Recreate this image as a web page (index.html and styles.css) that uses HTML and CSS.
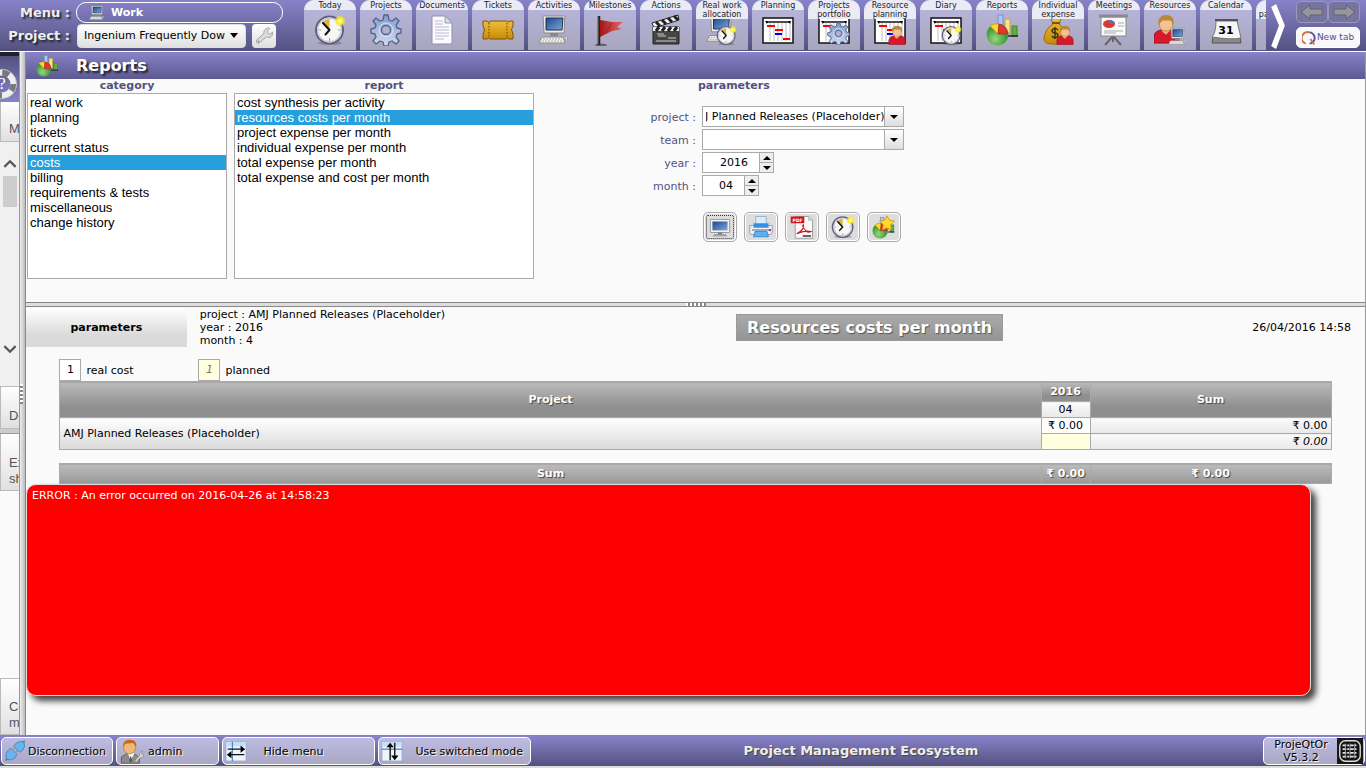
FILE: index.html
```html
<!DOCTYPE html>
<html lang="en">
<head>
    <meta charset="UTF-8">
    <meta name="viewport" content="width=device-width, initial-scale=1.0">
    <title>Reports - ProjeQtOr</title>
    <link rel="stylesheet" href="styles.css">
</head>
<body>
    <!-- Icon set -->
    <svg class="sprite" aria-hidden="true">
        <defs>
            <linearGradient id="g-screen" x2="1" y2="1"><stop stop-color="#1c468f"/><stop offset="1" stop-color="#7fa8dc"/></linearGradient>
            <linearGradient id="g-gold" x2="0" y2="1"><stop stop-color="#f0be38"/><stop offset="1" stop-color="#c88a08"/></linearGradient>
            <linearGradient id="g-gear" x2="0" y2="1"><stop stop-color="#7e9bc9"/><stop offset="1" stop-color="#d5dcf0"/></linearGradient>
            <linearGradient id="g-flag" x2="1"><stop stop-color="#a31515"/><stop offset="1" stop-color="#e46a62"/></linearGradient>
            <radialGradient id="g-green" cx=".4" cy=".7"><stop stop-color="#9ad87a"/><stop offset="1" stop-color="#3c9a3c"/></radialGradient>
            <radialGradient id="g-spark"><stop stop-color="#fffcc0"/><stop offset=".5" stop-color="#f8ee20"/><stop offset="1" stop-color="#f8ee20" stop-opacity="0"/></radialGradient>
        </defs>
        <symbol id="i-clock" viewBox="0 0 32 32">
            <ellipse cx="16" cy="29" rx="12" ry="2" fill="#555" opacity=".4"/>
            <circle cx="15.500" cy="16" r="13.500" fill="#f7f7f4" stroke="#625f7c" stroke-width="2"/>
            <circle cx="15.500" cy="16" r="11.800" fill="none" stroke="#c9c7da" stroke-width="1.500"/>
            <path d="M15.500 16L8 9q3-4 7.500-4z" fill="#dcb247"/>
            <path d="M15.500 16L9 9M15.500 16l-4 4.500" stroke="#111" stroke-width="2" stroke-linecap="round"/>
            <path d="M15.500 24v3M5 16h2M24 16h2" stroke="#999"/>
            <circle cx="26" cy="7" r="6" fill="url(#g-spark)"/>
        </symbol>
        <symbol id="i-gear" viewBox="0 0 32 32">
            <path d="M14 1h4l1 5 3 1 4-3 3 3-3 4 1 3 4 1v4l-4 1-1 3 3 4-3 3-4-3-3 1-1 4h-4l-1-4-3-1-4 3-3-3 3-4-1-3-4-1v-4l4-1 1-3-3-4 3-3 4 3 3-1z" fill="url(#g-gear)" stroke="#50648f" stroke-width="1.300" stroke-linejoin="round"/>
            <circle cx="16" cy="16" r="4.500" fill="#b2b0cf" stroke="#50648f" stroke-width="1.300"/>
            <circle cx="16" cy="16" r="7" fill="none" stroke="#dfe6f5"/>
        </symbol>
        <symbol id="i-doc" viewBox="0 0 32 32">
            <path d="M6 2h13l7 7v21H6z" fill="#fbfbff" stroke="#98a"/>
            <path d="M19 2v7h7z" fill="#dcdce8" stroke="#99a"/>
            <path d="M9 7h8M9 10h8M9 13h14M9 16h14M9 19h14M9 22h14M9 25h9" stroke="#b9bad0"/>
        </symbol>
        <symbol id="i-ticket" viewBox="0 0 32 32">
            <path d="M1 7h4q1 2 3 1V7h17q1 2 3 0h3v5q-3 3 0 8v5h-4q-2-2-3 0H8q-1-2-3 0H1v-5q3-4 0-8z" fill="url(#g-gold)" stroke="#7d5409"/>
            <path d="M7 9v15M25 9v15" stroke="#6b4708" stroke-dasharray="1.500 1.500"/>
        </symbol>
        <symbol id="i-pc" viewBox="0 0 32 32">
            <path d="M5 2h22l-1 17H6z" fill="#ecece6" stroke="#8a8a86"/>
            <path d="M8 4h17l-1 12H8z" fill="url(#g-screen)" stroke="#1b2d5a"/>
            <path d="M12 19h8v3h-8z" fill="#888"/>
            <path d="M4 23h21l2 6H1z" fill="#f1f1ec" stroke="#8a8a86"/>
            <path d="M5 25h19M4 27h21" stroke="#aaa" stroke-dasharray="2 1"/>
            <path d="M27 23q4-2 2 3" fill="#eee" stroke="#999"/>
        </symbol>
        <symbol id="i-monitor" viewBox="0 0 32 32">
            <rect x="2" y="5" width="28" height="19" rx="1" fill="#f3f3f0" stroke="#777"/>
            <rect x="5" y="8" width="22" height="13" fill="url(#g-screen)"/>
            <path d="M13 24h6v3h-6z" fill="#777"/><path d="M8 27h16l2 2H6z" fill="#bbb" stroke="#888"/>
        </symbol>
        <symbol id="i-flag" viewBox="0 0 32 32">
            <path d="M5 31V2" stroke="#222" stroke-width="2.500"/><path d="M4 30V3" stroke="#777"/>
            <path d="M6 6l12 2 11 0-6 5 5 2-10 2-12 6z" fill="url(#g-flag)"/>
            <path d="M18 8l-6 12" stroke="#8e1414" opacity=".5"/>
            <ellipse cx="7" cy="31" rx="6" ry="1.500" fill="#333" opacity=".6"/>
        </symbol>
        <symbol id="i-clap" viewBox="0 0 32 32">
            <path d="M2 9L28 1l1 5L4 14z" fill="#f4f4f4" stroke="#222"/>
            <path d="M6 8l4 4M12 6l4 4M18 4l4 4M24 2l4 4" stroke="#222" stroke-width="3"/>
            <path d="M3 13h26v17H3z" fill="#444744" stroke="#222"/>
            <path d="M3 13h26v4H3z" fill="#eee"/><path d="M6 17l3-4M12 17l3-4M18 17l3-4M24 17l3-4" stroke="#222" stroke-width="3"/>
            <path d="M7 20h7M8 22h8M18 24h8M6 27h20" stroke="#ccc"/>
        </symbol>
        <symbol id="i-gantt" viewBox="0 0 32 32">
            <rect x="1" y="4" width="30" height="25" fill="#fff" stroke="#111" stroke-width="1.500"/>
            <path d="M8 9v18M12 9v18M16 9v18M20 9v18M24 9v18M28 9v18" stroke="#c0c0c8"/>
            <path d="M4 8h24" stroke="#111" stroke-width="1.500"/><path d="M3 7h3l-1 3zM26 7h3l-1 3z"/>
            <path d="M5 12h8M13 16h8M21 25h7" stroke="#f00" stroke-width="2"/><path d="M13 20h7" stroke="#00f" stroke-width="2"/>
        </symbol>
        <symbol id="i-person" viewBox="0 0 32 32">
            <path d="M3 31V24q1-6 8-7l5 3 5-3q8 1 8 8v6z" fill="#d8182c" stroke="#99101c"/>
            <path d="M12 15h8v3l-4 4-4-3z" fill="#e9b07a"/>
            <rect x="9" y="3" width="14" height="15" rx="6" fill="#f1c391" stroke="#bd8650"/>
            <path d="M8 12V6q2-5 9-5 7 1 7 6v5l-3-5H12z" fill="#b98838"/>
        </symbol>
        <symbol id="i-portfolio" viewBox="0 0 32 32">
            <use href="#i-gantt"/><use href="#i-gear" x="9" y="8" width="23" height="23"/>
        </symbol>
        <symbol id="i-work" viewBox="0 0 32 32">
            <use href="#i-pc" width="30" height="30"/><use href="#i-clock" x="10" y="11" width="21" height="21"/>
        </symbol>
        <symbol id="i-resplan" viewBox="0 0 32 32">
            <use href="#i-gantt"/><use href="#i-person" x="13" y="11" width="20" height="20"/>
        </symbol>
        <symbol id="i-diary" viewBox="0 0 32 32">
            <use href="#i-gantt"/><use href="#i-clock" x="11" y="11" width="21" height="21"/>
        </symbol>
        <symbol id="i-pie" viewBox="0 0 32 32">
            <rect x="12" y="1" width="5" height="12" fill="#a9c7f2" stroke="#6f95cf"/>
            <rect x="19" y="5" width="5" height="14" fill="#f8e28c" stroke="#caa53e"/>
            <rect x="26" y="12" width="5" height="10" fill="#5fae40" stroke="#3c8a2c"/>
            <path d="M22 22h10" stroke="#222" stroke-width="1.500"/>
            <circle cx="11.500" cy="20.500" r="10.800" fill="url(#g-green)"/>
            <path d="M12 20L4 12q4-3 9-2z" fill="#f9d92c" stroke="#b88a10" stroke-width=".6"/>
            <path d="M12 20l1-10q7 1 9 10z" fill="#e8322c" stroke="#b01818" stroke-width=".6"/>
        </symbol>
        <symbol id="i-star" viewBox="0 0 32 32">
            <use href="#i-pie" y="2" width="30" height="30"/>
            <path d="M20 1l3 6 7 1-5 5 1 7-6-3-6 3 1-7-5-5 7-1z" fill="#ffd92e" stroke="#d58a08"/>
        </symbol>
        <symbol id="i-bag" viewBox="0 0 32 32">
            <path d="M8 3q6-3 12 0l-3 7q10 8 9 16-2 5-12 4Q1 31 2 24q1-9 9-14z" fill="url(#g-gold)" stroke="#9a6b10"/>
            <path d="M10 9h8" stroke="#7a5208" stroke-width="2"/>
            <path d="M16 16q-3-3-6 0 0 3 3 3t3 3q-3 4-6 0M13 13v12" fill="none" stroke="#3e3216" stroke-width="1.500"/>
            <use href="#i-person" x="13" y="11" width="20" height="20"/>
        </symbol>
        <symbol id="i-board" viewBox="0 0 32 32">
            <path d="M15 22l-8 9M15 22l8 9M15 20v8" stroke="#666" stroke-width="2"/>
            <rect x="3" y="3" width="25" height="19" fill="#fafafa" stroke="#888"/>
            <path d="M1 2h29" stroke="#8a8a90" stroke-width="3"/>
            <ellipse cx="11" cy="10" rx="6" ry="4" fill="#d63a32"/><path d="M11 10V6q5 0 6 4z" fill="#4477c4"/>
            <path d="M20 9h6M20 12h6M6 17h19M6 19h12" stroke="#aaa"/>
        </symbol>
        <symbol id="i-resource" viewBox="0 0 32 32">
            <use href="#i-person" x="-3" width="30" height="30"/><use href="#i-pc" x="14" y="13" width="19" height="19"/>
        </symbol>
        <symbol id="i-cal" viewBox="0 0 32 32">
            <path d="M3 23h27l1 6H2z" fill="#888" stroke="#555"/>
            <path d="M6 7h21l4 17q-10 2-29-1 4-5 4-16z" fill="#f6f6f6" stroke="#777"/><path d="M5 6h23" stroke="#555" stroke-width="2"/>
            <text x="16" y="20" class="cal-day">31</text>
        </symbol>
        <symbol id="i-wrench" viewBox="0 0 24 24">
            <path d="M5 21q-3-1-2-4l9-8q-1-5 5-7l2 1-3 3 1 3 3 1 2-3q1 6-4 7l-3-1z" fill="#dcdcdc" stroke="#999"/><circle cx="5.500" cy="18.500" r="1" fill="#888"/>
        </symbol>
        <symbol id="i-printer" viewBox="0 0 32 32">
            <path d="M9 2h14v14H9z" fill="#d9ecfb" stroke="#7fa7cb"/>
            <path d="M1 14h30v9q0 3-3 3H4q-3 0-3-3z" fill="#eef1f6" stroke="#7c8ca8"/>
            <path d="M6 11h20v6H6z" fill="#3590e0"/><path d="M4 20h24" stroke="#8592aa" stroke-width="2"/>
            <path d="M8 22h16l2 7H6z" fill="#57b4f2" stroke="#2b79b8"/><circle cx="28" cy="20" r="1.500" fill="#e02"/>
        </symbol>
        <symbol id="i-pdf" viewBox="0 0 32 32">
            <path d="M7 2h18l5 5v24H7z" fill="#fafafa" stroke="#888"/><path d="M24 2v6h6z" fill="#ccc"/>
            <path d="M1 2h18v9H1z" fill="#d2151b"/><text x="10" y="9" class="pdf-word">PDF</text>
            <path d="M9 25q10-5 9-12-3 1 3 8 3 3 7 1-9-2-19 3z" fill="none" stroke="#d2151b" stroke-width="1.500"/>
            <path d="M17 28h11" stroke="#333" stroke-width="2"/>
        </symbol>
        <symbol id="i-plug" viewBox="0 0 32 32">
            <path d="M2 30l6-6M24 8l6-7" stroke="#777" stroke-width="2.500"/>
            <path d="M4 28q-3-7 1-12l5-4 9 9-3 5q-6 5-12 2z" fill="#6ab4ee" stroke="#2e76b8"/>
            <path d="M14 9l3-4q6-5 12-2 3 7-2 12l-4 3z" fill="#6ab4ee" stroke="#2e76b8"/>
            <path d="M12 15l4-4M16 19l4-4" stroke="#999" stroke-width="2.500"/>
        </symbol>
        <symbol id="i-admin" viewBox="0 0 32 32">
            <path d="M3 31v-8l8-5h8l7 6v7z" fill="#8b8b8d" stroke="#555"/><path d="M11 18l4 9 5-9z" fill="#fff"/><path d="M15 21l-2 7 2 2 2-2z" fill="#555"/>
            <rect x="6" y="2" width="15" height="17" rx="7" fill="#f1b777" stroke="#b97834"/><path d="M5 10q0-9 9-9t8 9L18 5 8 6z" fill="#c06c18"/>
            <path d="M20 28l6-7q-1-4 4-6l-1 4 3 1q-1 5-5 4l-5 6z" fill="#d4d4d8" stroke="#888"/>
        </symbol>
        <symbol id="i-hide" viewBox="0 0 24 24">
            <rect x="1" y="2" width="22" height="21" fill="#edf4fc" stroke="#8fa7c5"/><rect x="1" y="2" width="22" height="5" fill="#c5ddf5"/><path d="M8 2v21" stroke="#2a65ba"/>
            <path d="M3 10h15M6 16h15" stroke="#111" stroke-width="1.500"/><path d="M17 6l5 4-5 4zM7 12l-5 4 5 4z"/>
        </symbol>
        <symbol id="i-switch" viewBox="0 0 24 24">
            <rect x="1" y="2" width="22" height="21" fill="#edf4fc" stroke="#8fa7c5"/><rect x="1" y="2" width="22" height="5" fill="#c5ddf5"/><path d="M1 10h22" stroke="#1658c7"/>
            <path d="M10 5v17M15 3v17" stroke="#111" stroke-width="1.500"/><path d="M6 8l4-5 4 5zM11 17l4 5 4-5z"/>
        </symbol>
        <symbol id="i-help" viewBox="0 0 36 36">
            <circle cx="18" cy="18" r="13" fill="none" stroke="#eee" stroke-width="7"/>
            <circle cx="18" cy="18" r="13" fill="none" stroke="#77777c" stroke-width="7" stroke-dasharray="8 12.400"/>
            <circle cx="18" cy="18" r="16.500" fill="none" stroke="#bbb"/><text x="18" y="24" class="help-mark">?</text>
        </symbol>
        <symbol id="i-left" viewBox="0 0 24 16">
            <path d="M1 8l9-7v4h12v6H10v4z" fill="#96969c" stroke="#626270"/>
        </symbol>
        <symbol id="i-q" viewBox="0 0 16 16">
            <path d="M4 14A6 6 0 0 1 8 2" fill="none" stroke="#d5713c" stroke-width="2"/>
            <path d="M8 2a6 6 0 0 1 4 10q-2 2-4 2" fill="none" stroke="#56569b" stroke-width="2"/><path d="M9 9l4 6" stroke="#d5713c" stroke-width="2"/>
        </symbol>
        <symbol id="i-logo" viewBox="0 0 28 28">
            <rect width="28" height="28" fill="#181818"/><rect x="3" y="3" width="22" height="22" rx="6" fill="#111" stroke="#ddd" stroke-width="1.500"/>
            <path d="M6 8h16M6 12h16M6 16h16M6 20h16" stroke="#e4e4e4" stroke-width="2" stroke-dasharray="4 1 2 1"/><path d="M9 6v16M14 6v16M19 6v16" stroke="#aaa"/>
        </symbol>
    </svg>

    <header class="top-bar">
        <div class="selectors">
            <span class="selector-label">Menu :</span>
            <button class="menu-pill"><svg><use href="#i-pc"/></svg>Work</button>
            <label class="selector-label" for="current-project">Project :</label>
            <div class="project-row">
                <span class="project-select">
                    <select id="current-project"><option>Ingenium Frequently Dow</option></select>
                </span>
                <button class="tool-button" aria-label="Project settings"><svg><use href="#i-wrench"/></svg></button>
            </div>
        </div>
        <nav class="tabs">
            <a href="#" class="tab"><svg><use href="#i-clock"/></svg><span>Today</span></a>
            <a href="#" class="tab"><svg><use href="#i-gear"/></svg><span>Projects</span></a>
            <a href="#" class="tab"><svg><use href="#i-doc"/></svg><span>Documents</span></a>
            <a href="#" class="tab"><svg><use href="#i-ticket"/></svg><span>Tickets</span></a>
            <a href="#" class="tab"><svg><use href="#i-pc"/></svg><span>Activities</span></a>
            <a href="#" class="tab"><svg><use href="#i-flag"/></svg><span>Milestones</span></a>
            <a href="#" class="tab"><svg><use href="#i-clap"/></svg><span>Actions</span></a>
            <a href="#" class="tab"><svg><use href="#i-work"/></svg><span>Real work allocation</span></a>
            <a href="#" class="tab"><svg><use href="#i-gantt"/></svg><span>Planning</span></a>
            <a href="#" class="tab"><svg><use href="#i-portfolio"/></svg><span>Projects portfolio</span></a>
            <a href="#" class="tab"><svg><use href="#i-resplan"/></svg><span>Resource planning</span></a>
            <a href="#" class="tab"><svg><use href="#i-diary"/></svg><span>Diary</span></a>
            <a href="#" class="tab"><svg><use href="#i-pie"/></svg><span>Reports</span></a>
            <a href="#" class="tab"><svg><use href="#i-bag"/></svg><span>Individual expense</span></a>
            <a href="#" class="tab"><svg><use href="#i-board"/></svg><span>Meetings</span></a>
            <a href="#" class="tab"><svg><use href="#i-resource"/></svg><span>Resources</span></a>
            <a href="#" class="tab"><svg><use href="#i-cal"/></svg><span>Calendar</span></a>
            <a href="#" class="tab"><span>User parameters</span></a>
        </nav>
        <button class="tabs-next" aria-label="More tabs"><svg viewBox="0 0 14 46"><path d="M0 3l5-3 9 22-9 24-5-3 8-21z" fill="#fff"/></svg></button>
        <div class="history">
            <button aria-label="Back"><svg><use href="#i-left"/></svg></button>
            <button aria-label="Forward" class="forward"><svg><use href="#i-left"/></svg></button>
            <button class="new-tab"><svg><use href="#i-q"/></svg>New tab</button>
        </div>
    </header>

    <div class="workspace">
        <aside class="sidebar">
            <div class="side-logo"><svg><use href="#i-help"/></svg></div>
            <div class="side-title menu-title">Menu</div>
            <div class="side-scroll">
                <svg viewBox="0 0 12 8"><path d="M1 7l5-5 5 5"/></svg>
                <div class="thumb"></div>
                <svg class="scroll-down" viewBox="0 0 12 8"><path d="M1 1l5 5 5-5"/></svg>
            </div>
            <div class="side-title docs-title">Documents</div>
            <div class="side-split"></div>
            <div class="side-title links-title">External shortcuts</div>
            <div class="side-space"></div>
            <div class="side-title console-title">Console messages</div>
        </aside>
        <div class="splitter-v"><i></i></div>

        <main class="content">
            <div class="page-title"><svg><use href="#i-pie"/></svg><h1>Reports</h1></div>
            <section class="report-picker">
                <div class="list-block">
                    <label for="category">category</label>
                    <select id="category" class="list category" size="12">
                        <option>real work</option>
                        <option>planning</option>
                        <option>tickets</option>
                        <option>current status</option>
                        <option selected>costs</option>
                        <option>billing</option>
                        <option>requirements &amp; tests</option>
                        <option>miscellaneous</option>
                        <option>change history</option>
                    </select>
                </div>
                <div class="list-block">
                    <label for="report">report</label>
                    <select id="report" class="list report" size="12">
                        <option>cost synthesis per activity</option>
                        <option selected>resources costs per month</option>
                        <option>project expense per month</option>
                        <option>individual expense per month</option>
                        <option>total expense per month</option>
                        <option>total expense and cost per month</option>
                    </select>
                </div>
                <form class="params">
                    <h2>parameters</h2>
                    <label for="p-project">project :</label>
                    <div class="combo">
                        <input id="p-project" type="text" value="AMJ Planned Releases (Placeholder)">
                        <button type="button" aria-label="Open project list"></button>
                    </div>
                    <label for="p-team">team :</label>
                    <div class="combo">
                        <input id="p-team" type="text">
                        <button type="button" aria-label="Open team list"></button>
                    </div>
                    <label for="p-year">year :</label>
                    <div class="spinner">
                        <input id="p-year" type="text" value="2016">
                        <div><button type="button" aria-label="Next year"></button><button type="button" class="down" aria-label="Previous year"></button></div>
                    </div>
                    <label for="p-month">month :</label>
                    <div class="spinner short">
                        <input id="p-month" type="text" value="04">
                        <div><button type="button" aria-label="Next month"></button><button type="button" class="down" aria-label="Previous month"></button></div>
                    </div>
                    <div class="actions">
                        <button type="button" class="focused" aria-label="Display"><svg><use href="#i-monitor"/></svg></button>
                        <button type="button" aria-label="Print"><svg><use href="#i-printer"/></svg></button>
                        <button type="button" aria-label="Export to PDF"><svg><use href="#i-pdf"/></svg></button>
                        <button type="button" aria-label="Show on today page"><svg><use href="#i-clock"/></svg></button>
                        <button type="button" aria-label="Add to favorites"><svg><use href="#i-star"/></svg></button>
                    </div>
                </form>
            </section>
            <div class="splitter-h"><i></i></div>

            <section class="result">
                <div class="report-head">
                    <div class="head-params">parameters</div>
                    <div class="head-values">project : AMJ Planned Releases (Placeholder)<br>year : 2016<br>month : 4</div>
                    <div class="head-title"><h2>Resources costs per month</h2></div>
                    <div class="head-date">26/04/2016 14:58</div>
                </div>
                <div class="legend">
                    <span class="swatch">1</span><span class="legend-text">real cost</span>
                    <span class="swatch planned">1</span><span>planned</span>
                </div>
                <table class="costs">
                    <colgroup><col><col class="col-month"><col class="col-sum"></colgroup>
                    <thead>
                        <tr class="row-year"><th rowspan="2">Project</th><th>2016</th><th rowspan="2">Sum</th></tr>
                        <tr><td class="month">04</td></tr>
                    </thead>
                    <tbody>
                        <tr><td rowspan="2" class="name">AMJ Planned Releases (Placeholder)</td><td class="real">₹ 0.00</td><td class="sum">₹ 0.00</td></tr>
                        <tr><td class="planned"></td><td class="sum italic">₹ 0.00</td></tr>
                        <tr class="gap"><td colspan="3"></td></tr>
                    </tbody>
                    <tfoot>
                        <tr><th>Sum</th><th>₹ 0.00</th><th>₹ 0.00</th></tr>
                    </tfoot>
                </table>
                <div class="error" role="alert">ERROR : An error occurred on 2016-04-26 at 14:58:23</div>
            </section>
        </main>
    </div>

    <footer class="bottom-bar">
        <button class="disconnect"><svg><use href="#i-plug"/></svg><span>Disconnection</span></button>
        <button class="user"><svg><use href="#i-admin"/></svg><span>admin</span></button>
        <button class="wide hide-menu"><svg><use href="#i-hide"/></svg><span>Hide menu</span></button>
        <button class="wide switch-mode"><svg><use href="#i-switch"/></svg><span>Use switched mode</span></button>
        <div class="slogan">Project Management Ecosystem</div>
        <button class="version"><span>ProjeQtOr V5.3.2</span><svg><use href="#i-logo"/></svg></button>
    </footer>

    <script>
        // Show the end of the project name when it is longer than the field
        const projectField = document.getElementById('p-project');
        projectField.scrollLeft = projectField.scrollWidth;
    </script>
</body>
</html>
```
FILE: styles.css
```css
* {
    margin: 0;
    padding: 0;
    box-sizing: border-box;
}

body {
    font-family: Verdana, "DejaVu Sans", sans-serif;
    font-size: 11px;
    line-height: 13px;
    color: #000;
    background: #fafafa;
    height: 100vh;
    display: flex;
    flex-direction: column;
    overflow: hidden;
}

button, input, select {
    font: inherit;
    color: inherit;
}

button {
    border: none;
    background: none;
}

a {
    color: inherit;
    text-decoration: none;
}

svg {
    display: block;
    flex: none;
}

.sprite {
    position: absolute;
    width: 0;
    height: 0;
    visibility: hidden;
}

.cal-day {
    font-size: 11px;
    font-weight: bold;
    text-anchor: middle;
}

.pdf-word {
    font-size: 6px;
    font-weight: bold;
    text-anchor: middle;
    fill: #fff;
}

.help-mark {
    font-family: "Liberation Serif", serif;
    font-size: 19px;
    text-anchor: middle;
    fill: #fff;
}

/* Top bar */
.top-bar {
    display: flex;
    flex: none;
    height: 52px;
    background: linear-gradient(#8783c9, #545180);
    border-bottom: 1px solid #fff;
}

.selectors {
    width: 304px;
    display: grid;
    grid-template-columns: 70px 1fr;
    grid-template-rows: 21px 25px;
    column-gap: 6px;
    padding: 2px 21px 0 0;
    align-items: center;
}

.selector-label {
    font-size: 13px;
    line-height: 20px;
    font-weight: bold;
    text-align: right;
    color: #eee;
    text-shadow: 2px 2px 2px #222;
}

.menu-pill {
    display: flex;
    align-items: center;
    gap: 6px;
    height: 21px;
    padding-left: 12px;
    border: 1px solid #fff;
    border-radius: 10px;
    color: #fff;
    font-weight: bold;
}

.menu-pill svg {
    width: 16px;
    height: 16px;
}

.project-row {
    display: flex;
    gap: 6px;
    padding-left: 1px;
}

.project-select {
    position: relative;
}

.project-select::after {
    content: "";
    position: absolute;
    right: 8px;
    top: 9px;
    border: 4px solid transparent;
    border-top: 5px solid #000;
    pointer-events: none;
}

.project-select select {
    appearance: none;
    width: 169px;
    height: 24px;
    padding-left: 6px;
    border: 1px solid #ddd;
    border-radius: 4px;
    background: linear-gradient(#fff, #e0e0e0);
}

.tool-button {
    width: 24px;
    height: 24px;
    padding: 2px;
    border-radius: 4px;
    background: linear-gradient(#fff, #ddd);
}

.tool-button svg {
    width: 20px;
    height: 20px;
}

.tabs {
    flex: 1;
    display: flex;
    gap: 4px;
    overflow: hidden;
}

.tab {
    position: relative;
    flex: none;
    width: 52px;
    height: 50px;
    padding-bottom: 4px;
    display: flex;
    justify-content: center;
    align-items: flex-end;
    border-radius: 10px 10px 0 0;
    overflow: hidden;
    background: linear-gradient(#bab7e0, #a8a6bd);
}

.tab svg {
    width: 32px;
    height: 32px;
}

.tab span {
    position: absolute;
    top: 0;
    left: 0;
    right: 0;
    padding-top: 1px;
    font-size: 8px;
    line-height: 9px;
    text-align: center;
    background: #ebebf5;
    color: #222;
}

.tabs-next {
    width: 30px;
    padding: 2px 0 0 5px;
}

.tabs-next svg {
    width: 14px;
    height: 45px;
}

.history {
    width: 70px;
    padding-top: 1px;
    display: flex;
    flex-wrap: wrap;
    align-content: flex-start;
    row-gap: 4px;
}

.history button {
    width: 32px;
    height: 22px;
    display: flex;
    align-items: center;
    justify-content: center;
    border: 1px solid #9c9abc;
    border-radius: 5px;
    background: #7674a0;
}

.history svg {
    width: 24px;
    height: 16px;
}

.history .forward svg {
    transform: scaleX(-1);
}

.history .new-tab {
    width: 64px;
    height: 21px;
    border: 1px solid #fff;
    background: #f8f8fc;
    color: #545180;
    font-size: 9px;
    white-space: nowrap;
    overflow: hidden;
}

.new-tab svg {
    width: 15px;
}

/* Left menu */
.workspace {
    flex: 1;
    min-height: 0;
    display: flex;
}

.sidebar {
    width: 20px;
    overflow: hidden;
    display: flex;
    flex-direction: column;
    border-right: 1px solid #999;
    color: #555;
    background: #fafafa;
}

.side-logo {
    height: 50px;
    padding-top: 12px;
    border-top: 4px solid #222;
    background: linear-gradient(#545180, #8783c9);
}

.side-logo svg {
    width: 32px;
    height: 32px;
    margin-left: -14px;
}

.side-title {
    flex: none;
    padding-left: 8px;
    font-family: "Liberation Sans", Arial, sans-serif;
    font-size: 13px;
    line-height: 16px;
    border-left: 1px solid #bbb;
    border-bottom: 1px solid #bbb;
    background: linear-gradient(#fff, #e0e0e0);
}

.menu-title {
    height: 40px;
    padding-top: 19px;
}

.side-scroll {
    height: 244px;
    padding: 17px 2px 32px 3px;
    display: flex;
    flex-direction: column;
    background: #f0f0f0;
}

.side-scroll svg {
    width: 14px;
    height: 9px;
    fill: none;
    stroke: #555;
    stroke-width: 2;
}

.scroll-down {
    margin-top: auto;
}

.thumb {
    height: 31px;
    margin-top: 8px;
    background: #cdcdcd;
}

.docs-title {
    height: 43px;
    padding-top: 21px;
    border-top: 1px solid #bbb;
}

.side-split {
    height: 5px;
    border-bottom: 1px solid #999;
    background: #ccc;
}

.links-title {
    height: 57px;
    padding-top: 21px;
}

.side-space {
    flex: 1;
}

.console-title {
    height: 57px;
    padding-top: 20px;
    border-top: 1px solid #bbb;
}

.splitter-v {
    width: 6px;
    display: flex;
    align-items: center;
    border-right: 1px solid #888;
    background: linear-gradient(90deg, #eee, #bbb);
}

.splitter-v i {
    width: 3px;
    height: 20px;
    background: repeating-linear-gradient(#fff 0 2px, #888 2px 4px);
}

/* Report selection */
.content {
    flex: 1;
    min-width: 0;
    display: flex;
    flex-direction: column;
    border-right: 1px solid #999;
}

.page-title {
    flex: none;
    height: 27px;
    display: flex;
    align-items: center;
    gap: 18px;
    padding-left: 10px;
    background: linear-gradient(#8783c9, #5d5990);
}

.page-title svg {
    width: 22px;
    height: 22px;
}

.page-title h1 {
    font-size: 16px;
    line-height: 24px;
    color: #fff;
    text-shadow: 2px 2px 2px #222;
}

.report-picker {
    display: flex;
    gap: 7px;
    padding: 0 0 23px 1px;
}

.list-block {
    display: flex;
    flex-direction: column;
}

.list-block label, .params h2 {
    font-size: 11px;
    line-height: 14px;
    font-weight: bold;
    text-align: center;
    color: #545180;
}

.list {
    height: 186px;
    padding-top: 1px;
    border: 1px solid #aaa;
    border-radius: 0;
    background: #fff;
    font-family: "Liberation Sans", Arial, sans-serif;
    font-size: 13px;
    line-height: 15px;
    overflow: hidden;
}

.list option {
    min-height: 15px;
    padding: 0 2px;
}

.list option:checked {
    background: #269fdc linear-gradient(#269fdc, #269fdc);
    color: #fff;
}

.category {
    width: 200px;
}

.report {
    width: 300px;
}

.params {
    width: 380px;
    display: grid;
    grid-template-columns: 155px 1fr;
    grid-template-rows: 14px;
    column-gap: 6px;
    align-content: start;
    align-items: center;
}

.params h2 {
    grid-column: 2;
    justify-self: start;
    margin-left: -4px;
}

.params label {
    text-align: right;
    color: #545180;
}

.params .combo, .params .spinner {
    display: flex;
    height: 21px;
    margin-bottom: 2px;
    border: 1px solid #aaa;
    background: #fff;
}

.params h2 + label, .params h2 + label + .combo {
    margin-top: 13px;
}

.combo {
    width: 202px;
}

.combo input, .spinner input {
    flex: 1;
    min-width: 0;
    border: none;
    background: none;
    outline: none;
}

.combo input {
    margin-left: 3px;
}

.combo button {
    width: 19px;
    display: flex;
    justify-content: center;
    align-items: center;
    border-left: 1px solid #aaa;
    background: linear-gradient(#fff, #ddd);
}

.combo button::after {
    content: "";
    border: 4px solid transparent;
    border-top-color: #000;
    border-bottom: none;
}

.spinner {
    width: 72px;
}

.spinner.short {
    width: 57px;
}

.spinner input {
    padding-right: 11px;
    text-align: right;
}

.spinner div {
    width: 14px;
    display: flex;
    flex-direction: column;
    border-left: 1px solid #aaa;
}

.spinner button {
    flex: 1;
    display: flex;
    justify-content: center;
    align-items: center;
    background: #eee;
}

.spinner .down {
    border-top: 1px solid #aaa;
}

.spinner button::after {
    content: "";
    border: 4px solid transparent;
    border-bottom-color: #000;
    border-top: none;
}

.spinner .down::after {
    border-top: 4px solid #000;
    border-bottom: none;
}

.actions {
    grid-column: 2;
    display: flex;
    gap: 7px;
    padding: 14px 0 0 1px;
}

.actions button {
    width: 34px;
    height: 30px;
    display: flex;
    justify-content: center;
    align-items: center;
    border: 1px solid #aaa;
    border-radius: 5px;
    background: #ddd;
    box-shadow: inset 0 0 0 1px #fff;
}

.actions .focused {
    outline: 1px dotted #333;
    outline-offset: -4px;
}

.actions svg {
    width: 24px;
    height: 24px;
}

.actions .focused svg {
    width: 22px;
}

.splitter-h {
    flex: none;
    height: 5px;
    display: flex;
    justify-content: center;
    border-top: 1px solid #888;
    border-bottom: 1px solid #888;
    background: #ddd;
}

.splitter-h i {
    width: 20px;
    height: 3px;
    background: repeating-linear-gradient(90deg, #fff 0 2px, #888 2px 4px);
}

/* Report output */
.report-head {
    display: grid;
    grid-template-columns: 12% 28% 46% 14%;
    height: 40px;
    align-items: center;
}

.head-params {
    height: 39px;
    line-height: 40px;
    font-weight: bold;
    text-align: center;
    background: linear-gradient(#fff, #dadada 70%);
}

.head-values {
    padding-left: 13px;
}

.head-title {
    display: flex;
    justify-content: center;
}

.head-title h2 {
    padding: 1px 10px;
    border: 1px solid #999;
    background: linear-gradient(#aaa, #949494);
    font-size: 16px;
    line-height: 23px;
    color: #fff;
    white-space: nowrap;
    text-shadow: 1px 1px 1px #555;
}

.head-date {
    padding-right: 14px;
    text-align: right;
}

.legend {
    display: flex;
    align-items: center;
    width: 95%;
    margin: 12px auto 0;
}

.swatch {
    width: 22px;
    height: 22px;
    margin-right: 5px;
    line-height: 20px;
    text-align: center;
    border: 1px solid #aaa;
    background: #fff;
}

.swatch.planned {
    background: #ffffdd;
    color: #777;
    font-style: italic;
}

.legend-text {
    width: 112px;
}

.costs {
    width: 95%;
    margin: 0 auto;
    table-layout: fixed;
    border-collapse: collapse;
}

.col-month {
    width: 49px;
}

.col-sum {
    width: 241px;
}

.costs th, .costs td {
    height: 16px;
    border: 1px solid #aaa;
    text-align: center;
}

.costs th {
    color: #fff;
    text-shadow: 1px 1px 1px #444;
    background: linear-gradient(#bbb, #8f8f8f 70%);
}

.costs .row-year, .costs tfoot tr {
    height: 20px;
}

.costs tfoot th {
    background: linear-gradient(#bbb, #999);
}

.costs .month, .costs .sum {
    background: linear-gradient(#fafafa, #e8e8e8);
}

.costs .name {
    padding-left: 3px;
    text-align: left;
    background: linear-gradient(#fff, #dadada);
}

.costs .real {
    background: #fff;
}

.costs .planned {
    background: #ffffdd;
}

.costs .sum {
    padding-right: 3px;
    text-align: right;
}

.costs .italic {
    font-style: italic;
}

.costs .gap td {
    height: 14px;
    border-left: none;
    border-right: none;
}

.error {
    width: 96%;
    height: 212px;
    padding: 4px 5px;
    border: 1px solid #ddd;
    border-radius: 10px;
    background: #f00;
    color: #fff;
    box-shadow: 5px 5px 6px #444;
}

/* Bottom bar */
.bottom-bar {
    flex: none;
    height: 33px;
    display: flex;
    gap: 3px;
    padding: 1px 1px 2px;
    border-top: 1px solid #888;
    border-bottom: 2px solid #ddd;
    background: linear-gradient(#8783c9, #545180);
}

.bottom-bar button {
    height: 28px;
    display: flex;
    align-items: center;
    padding: 0 4px 0 2px;
    border: 1px solid #fff;
    border-radius: 5px;
    background: linear-gradient(#bdbbe0, #aaa8c5);
    text-shadow: 1px 1px 0 #eee;
}

.bottom-bar button span {
    flex: 1;
}

.bottom-bar button svg {
    width: 22px;
    height: 22px;
}

.bottom-bar .disconnect {
    width: 112px;
}

.bottom-bar .user {
    width: 103px;
}

.bottom-bar .user svg {
    width: 25px;
    height: 25px;
}

.user span {
    padding-left: 4px;
    text-align: left;
}

.bottom-bar .wide {
    width: 153px;
}

.hide-menu span {
    padding-right: 30px;
}

.switch-mode span {
    text-align: right;
    padding-right: 3px;
}

.slogan {
    flex: 1;
    padding-right: 72px;
    font-size: 13px;
    line-height: 28px;
    font-weight: bold;
    text-align: center;
    color: #eee;
    text-shadow: 1px 1px 1px #444;
}

.bottom-bar .version {
    width: 102px;
    padding-right: 0;
}

.bottom-bar .version svg {
    width: 28px;
    height: 26px;
}
```
